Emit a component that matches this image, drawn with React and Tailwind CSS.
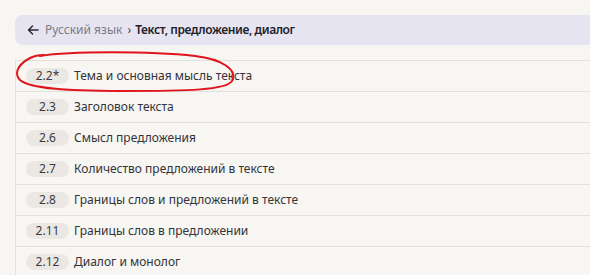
import React from "react";

const rows = [
  ["2.2*", "Тема и основная мысль текста"],
  ["2.3", "Заголовок текста"],
  ["2.6", "Смысл предложения"],
  ["2.7", "Количество предложений в тексте"],
  ["2.8", "Границы слов и предложений в тексте"],
  ["2.11", "Границы слов в предложении"],
  ["2.12", "Диалог и монолог"],
];

export default function App() {
  return (
    <div
      className="relative w-[590px] h-[275px] overflow-hidden bg-[#f7f6f3]"
      style={{ fontFamily: '"Noto Sans", "Open Sans", sans-serif' }}
    >
      <div className="pl-[15px] pt-[15px]">
        <div className="flex items-center h-[30px] w-[600px] rounded-l-[8px] bg-[#e6e4f1] pl-[12px] text-[12px]">
          <svg width="12" height="12" viewBox="0 0 12 12" fill="none" stroke="#2a2a33" strokeWidth="1.5" strokeLinecap="round" strokeLinejoin="round">
            <path d="M11 6H1.5M5.5 2L1.5 6l4 4" />
          </svg>
          <span className="ml-[6px] text-[#7b7b86]">Русский язык</span>
          <span className="ml-[5px] text-[#444]">›</span>
          <span className="ml-[4px] font-semibold tracking-[-0.4px] text-[#222228]">Текст, предложение, диалог</span>
        </div>
        <div className="mt-[15px] w-[600px] border-l border-t border-[#e3e1de]">
          {rows.map(([n, t]) => (
            <div key={n} className="flex items-center h-[31px] border-b border-[#e3e1de] pl-[10px]">
              <span className="flex items-center justify-center w-[43px] h-[16px] rounded-full bg-[#ebe8e4] text-[12px] text-[#3a3a3f]">
                {n}
              </span>
              <span className="ml-[5px] text-[12px] text-[#333338]">{t}</span>
            </div>
          ))}
        </div>
      </div>
      <svg className="absolute left-0 top-0" width="590" height="275" fill="none">
        <path
          d="M40 56 C 70 51, 150 51, 195 56 C 222 59, 238 70, 232 81 C 226 90, 190 91, 120 91 C 70 91, 30 89, 20 80 C 14 74, 17 65, 30 58 C 34 56, 38 55, 44 55"
          stroke="#e0141a"
          strokeWidth="2"
          strokeLinecap="round"
        />
      </svg>
    </div>
  );
}
